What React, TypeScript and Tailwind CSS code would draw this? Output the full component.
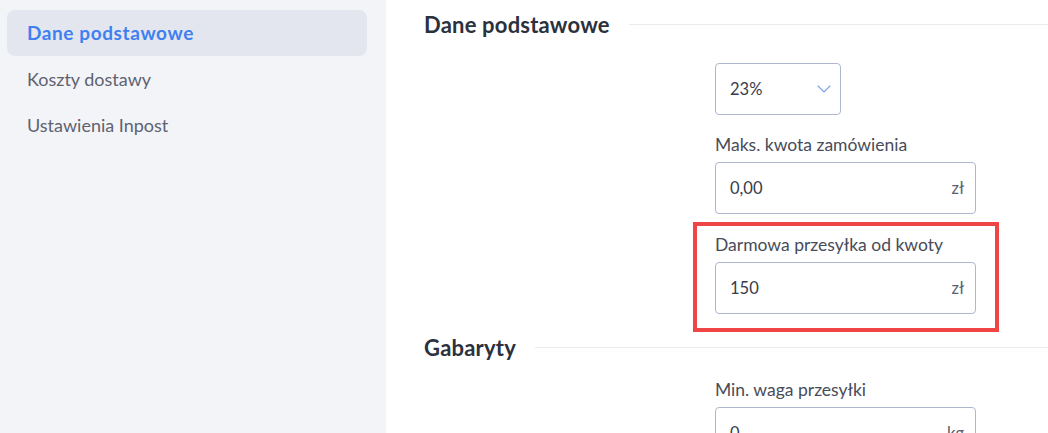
import { ChevronDown } from "lucide-react";

const navItems = [
  { label: "Dane podstawowe", active: true },
  { label: "Koszty dostawy", active: false },
  { label: "Ustawienia Inpost", active: false },
];

function SectionHeading({ title }: { title: string }) {
  return (
    <div className="flex h-[48px] items-center gap-[19px]">
      <h2 className="text-[22px] font-bold tracking-[0.2px] text-[#2b313d]">{title}</h2>
      <div className="h-px flex-1 bg-[#e9ebef]" />
    </div>
  );
}

function MoneyInput({ value, suffix }: { value: string; suffix: string }) {
  return (
    <div className="flex h-[52px] w-[261px] items-center justify-between rounded-[4px] border border-[#aeb7cf] bg-white pl-[14px] pr-[11px] text-[16.5px] text-[#363c4a]">
      <span>{value}</span>
      <span className="text-[#5b6170]">{suffix}</span>
    </div>
  );
}

function Field({ label, value, suffix }: { label: string; value: string; suffix: string }) {
  return (
    <div className="w-[261px]">
      <label className="block h-[22px] whitespace-nowrap text-[17.5px] leading-[22px] text-[#474c5a]">{label}</label>
      <div className="mt-[6px]">
        <MoneyInput value={value} suffix={suffix} />
      </div>
    </div>
  );
}

export default function App() {
  return (
    <div className="flex h-[433px] w-[1048px] overflow-hidden bg-white font-['Lato',sans-serif]">
      <aside className="w-[386px] shrink-0 bg-[#f3f4f8] pl-[7px] pr-[19px] pt-[10px]">
        {navItems.map((item) => (
          <div
            key={item.label}
            className={
              item.active
                ? "flex h-[46px] items-center rounded-[8px] bg-[#e3e6ef] px-[20px] text-[19px] font-bold tracking-[0.6px] text-[#3f7ff0]"
                : "flex h-[46px] items-center px-[20px] text-[18px] text-[#5e6270]"
            }
          >
            {item.label}
          </div>
        ))}
      </aside>

      <main className="flex-1 pl-[38px]">
        <SectionHeading title="Dane podstawowe" />
        <div className="ml-[291px] flex flex-col items-start">
          <div className="mt-[15px] flex h-[52px] w-[126px] items-center justify-between rounded-[4px] border border-[#aeb7cf] pl-[14px] pr-[4px] text-[16.5px] text-[#363c4a]">
            <span>23%</span>
            <ChevronDown size={24} strokeWidth={1.1} className="text-[#7ea4ea]" />
          </div>
          <div className="mt-[19px]">
            <Field label="Maks. kwota zamówienia" value="0,00" suffix="zł" />
          </div>
          <div className="relative mt-[20px]">
            <div className="pointer-events-none absolute -bottom-[18px] -left-[22px] -right-[23px] -top-[12px] border-[4px] border-[#f04545]" />
            <Field label="Darmowa przesyłka od kwoty" value="150" suffix="zł" />
          </div>
        </div>

        <div className="mt-[9px]">
          <SectionHeading title="Gabaryty" />
        </div>
        <div className="ml-[291px] mt-[8px]">
          <Field label="Min. waga przesyłki" value="0" suffix="kg" />
        </div>
      </main>
    </div>
  );
}
